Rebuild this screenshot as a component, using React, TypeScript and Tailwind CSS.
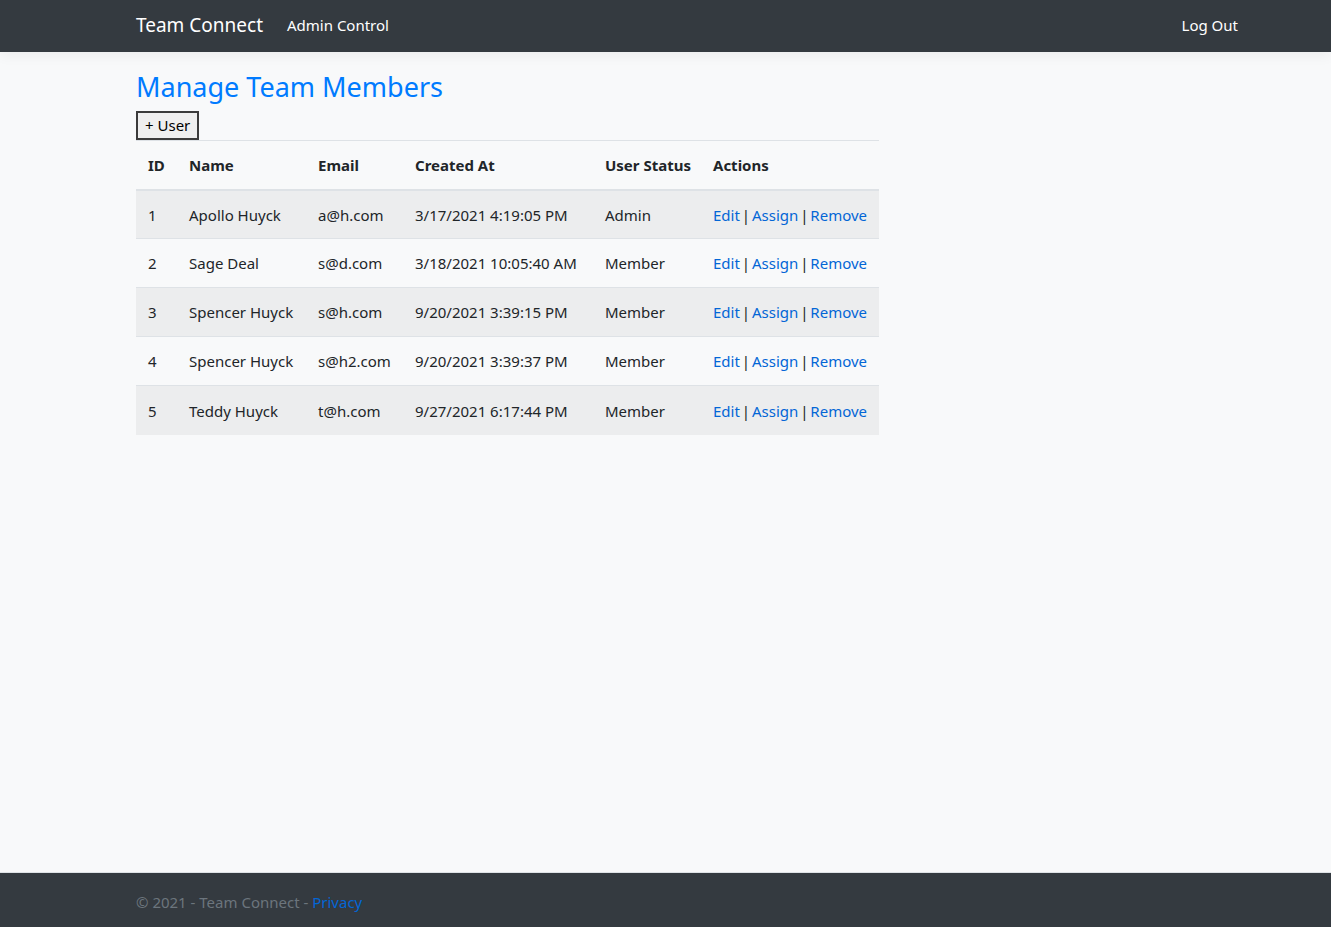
import React from 'react'

interface Member {
  id: number
  name: string
  email: string
  createdAt: string
  status: string
}

const members: Member[] = [
  { id: 1, name: 'Apollo Huyck', email: 'a@h.com', createdAt: '3/17/2021 4:19:05 PM', status: 'Admin' },
  { id: 2, name: 'Sage Deal', email: 's@d.com', createdAt: '3/18/2021 10:05:40 AM', status: 'Member' },
  { id: 3, name: 'Spencer Huyck', email: 's@h.com', createdAt: '9/20/2021 3:39:15 PM', status: 'Member' },
  { id: 4, name: 'Spencer Huyck', email: 's@h2.com', createdAt: '9/20/2021 3:39:37 PM', status: 'Member' },
  { id: 5, name: 'Teddy Huyck', email: 't@h.com', createdAt: '9/27/2021 6:17:44 PM', status: 'Member' },
]

const font = "font-['Noto_Sans','Liberation_Sans',sans-serif]"
const th = 'text-left font-bold px-3 h-[49px] border-b-2 border-[#dee2e6] whitespace-nowrap'

export default function App() {
  return (
    <div className={`min-h-screen flex flex-col bg-[#f8f9fa] text-[#212529] ${font}`}>
      {/* navbar */}
      <nav className="h-[52px] bg-[#343a40] shadow-[0_4px_12px_rgba(0,0,0,0.05)] flex items-center pb-[2px]">
        <div className="ml-[136px] w-[1110px] flex items-center">
          <a className="text-[19px] text-white mr-4">Team Connect</a>
          <a className="px-2 text-[15px] text-white">Admin Control</a>
          <a className="ml-auto px-2 text-[15px] text-white">Log Out</a>
        </div>
      </nav>

      {/* content */}
      <main className="flex-1 ml-[136px] w-[1110px] pt-4 pb-3">
        <h1 className="text-[27px] leading-[38px] text-[#007bff] mb-[5px]">Manage Team Members</h1>
        <button className="block px-[7px] h-[29px] text-[15px] leading-none bg-[#efefef] border-2 border-[#3b3b3b] text-black">
          + User
        </button>

        <table className="table-fixed w-[743px] border-collapse text-[15px]">
          <thead>
            <tr className="border-t border-[#dee2e6]">
              <th className={`w-[41px] ${th}`}>ID</th>
              <th className={`w-[129px] ${th}`}>Name</th>
              <th className={`w-[97px] ${th}`}>Email</th>
              <th className={`w-[190px] ${th}`}>Created At</th>
              <th className={`w-[108px] ${th}`}>User Status</th>
              <th className={`w-[178px] ${th}`}>Actions</th>
            </tr>
          </thead>
          <tbody>
            {members.map((m, i) => (
              <tr key={m.id} className={`border-t border-[#dee2e6] ${i % 2 === 0 ? 'bg-[#ecedee]' : ''}`}>
                <td className="px-3 h-[49px] pt-[1px]">{m.id}</td>
                <td className="px-3 pt-[1px] whitespace-nowrap">{m.name}</td>
                <td className="px-3 pt-[1px] whitespace-nowrap">{m.email}</td>
                <td className="px-3 pt-[1px] whitespace-nowrap">{m.createdAt}</td>
                <td className="px-3 pt-[1px]">{m.status}</td>
                <td className="px-3 pt-[1px] whitespace-nowrap [word-spacing:-2px]">
                  <a className="text-[#0366d6]">Edit</a> | <a className="text-[#0366d6]">Assign</a> |{' '}
                  <a className="text-[#0366d6]">Remove</a>
                </td>
              </tr>
            ))}
          </tbody>
        </table>
      </main>

      {/* footer */}
      <footer className="h-[55px] bg-[#343a40] border-t border-[#dee2e6] flex items-center pt-[4px]">
        <div className="ml-[136px] text-[15px] text-[#6c757d]">
          © 2021 - Team Connect - <a className="text-[#0366d6]">Privacy</a>
        </div>
      </footer>
    </div>
  )
}
